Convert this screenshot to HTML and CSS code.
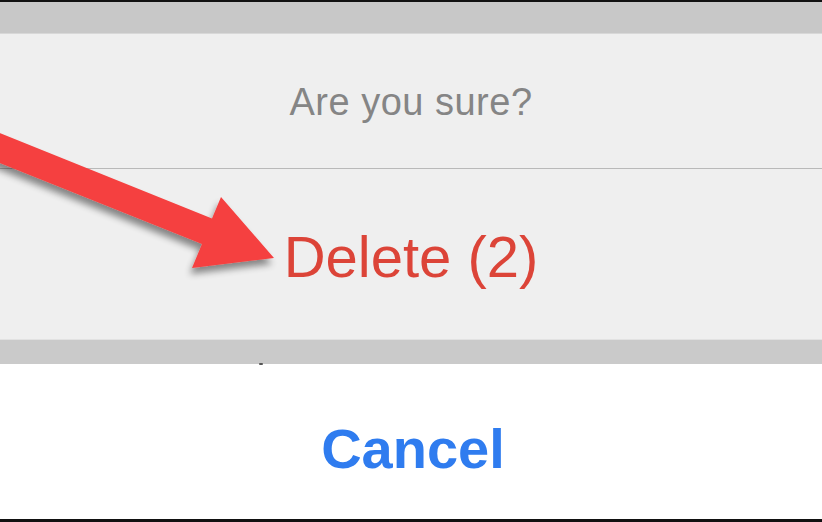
FILE: index.html
```html
<!DOCTYPE html>
<html>
<head>
<meta charset="utf-8">
<link rel="stylesheet" href="styles.css">
</head>
<body>
<div class="screen">
  <div class="top-band"></div>
  <div class="sheet">
    <div class="title-row"><span class="title">Are you sure?</span></div>
    <div class="action-row"><span class="delete">Delete (2)</span></div>
  </div>
  <div class="gap-band"><span class="dot"></span></div>
  <div class="cancel-row"><span class="cancel">Cancel</span></div>
  <svg class="arrow" width="320" height="320" viewBox="0 0 320 320" xmlns="http://www.w3.org/2000/svg">
    <defs>
      <filter id="sh" x="-20%" y="-20%" width="150%" height="150%">
        <feGaussianBlur in="SourceAlpha" stdDeviation="3.5"/>
        <feOffset dx="-2" dy="6" result="b"/>
        <feComponentTransfer><feFuncA type="linear" slope="0.45"/></feComponentTransfer>
        <feMerge><feMergeNode/><feMergeNode in="SourceGraphic"/></feMerge>
      </filter>
    </defs>
    <polygon filter="url(#sh)" fill="#f5403f" points="-10,129 212,218.5 221,197 274,258 192,268 202,244 -10,159"/>
  </svg>
</div>
</body>
</html>
```
FILE: styles.css
```css
html, body {
  margin: 0;
  padding: 0;
  background: #ffffff;
}
.screen {
  position: relative;
  width: 822px;
  height: 522px;
  overflow: hidden;
  display: flex;
  flex-direction: column;
  border-top: 2px solid #111;
  border-bottom: 3px solid #111;
  box-sizing: border-box;
  font-family: "Liberation Sans", Arial, sans-serif;
}
.top-band {
  height: 32px;
  background: #c8c8c8;
  border-bottom: 1px solid #d8d8d8;
  box-sizing: border-box;
}
.sheet {
  background: #efefef;
  display: flex;
  flex-direction: column;
}
.title-row {
  height: 134px;
  display: flex;
  align-items: center;
  justify-content: center;
  border-bottom: 1px solid #b9b9b9;
}
.title {
  font-size: 38px;
  color: #858585;
  letter-spacing: 0.5px;
  padding-top: 2px;
}
.action-row {
  height: 170px;
  display: flex;
  align-items: center;
  justify-content: center;
}
.delete {
  font-size: 58px;
  color: #dc4438;
  padding-top: 4px;
}
.gap-band {
  height: 25px;
  background: #cacaca;
  border-top: 1px solid #e2e2e2;
  box-sizing: border-box;
  position: relative;
}
.dot {
  position: absolute;
  left: 259px;
  bottom: -1px;
  width: 4px;
  height: 2px;
  background: #555;
  border-radius: 1px;
}
.cancel-row {
  flex: 1;
  display: flex;
  align-items: center;
  justify-content: center;
  padding-top: 14px;
  padding-left: 4px;
  background: #ffffff;
}
.cancel {
  font-size: 56px;
  font-weight: bold;
  color: #2f7cef;
}
.arrow {
  position: absolute;
  left: 0;
  top: -2px;
}
```
